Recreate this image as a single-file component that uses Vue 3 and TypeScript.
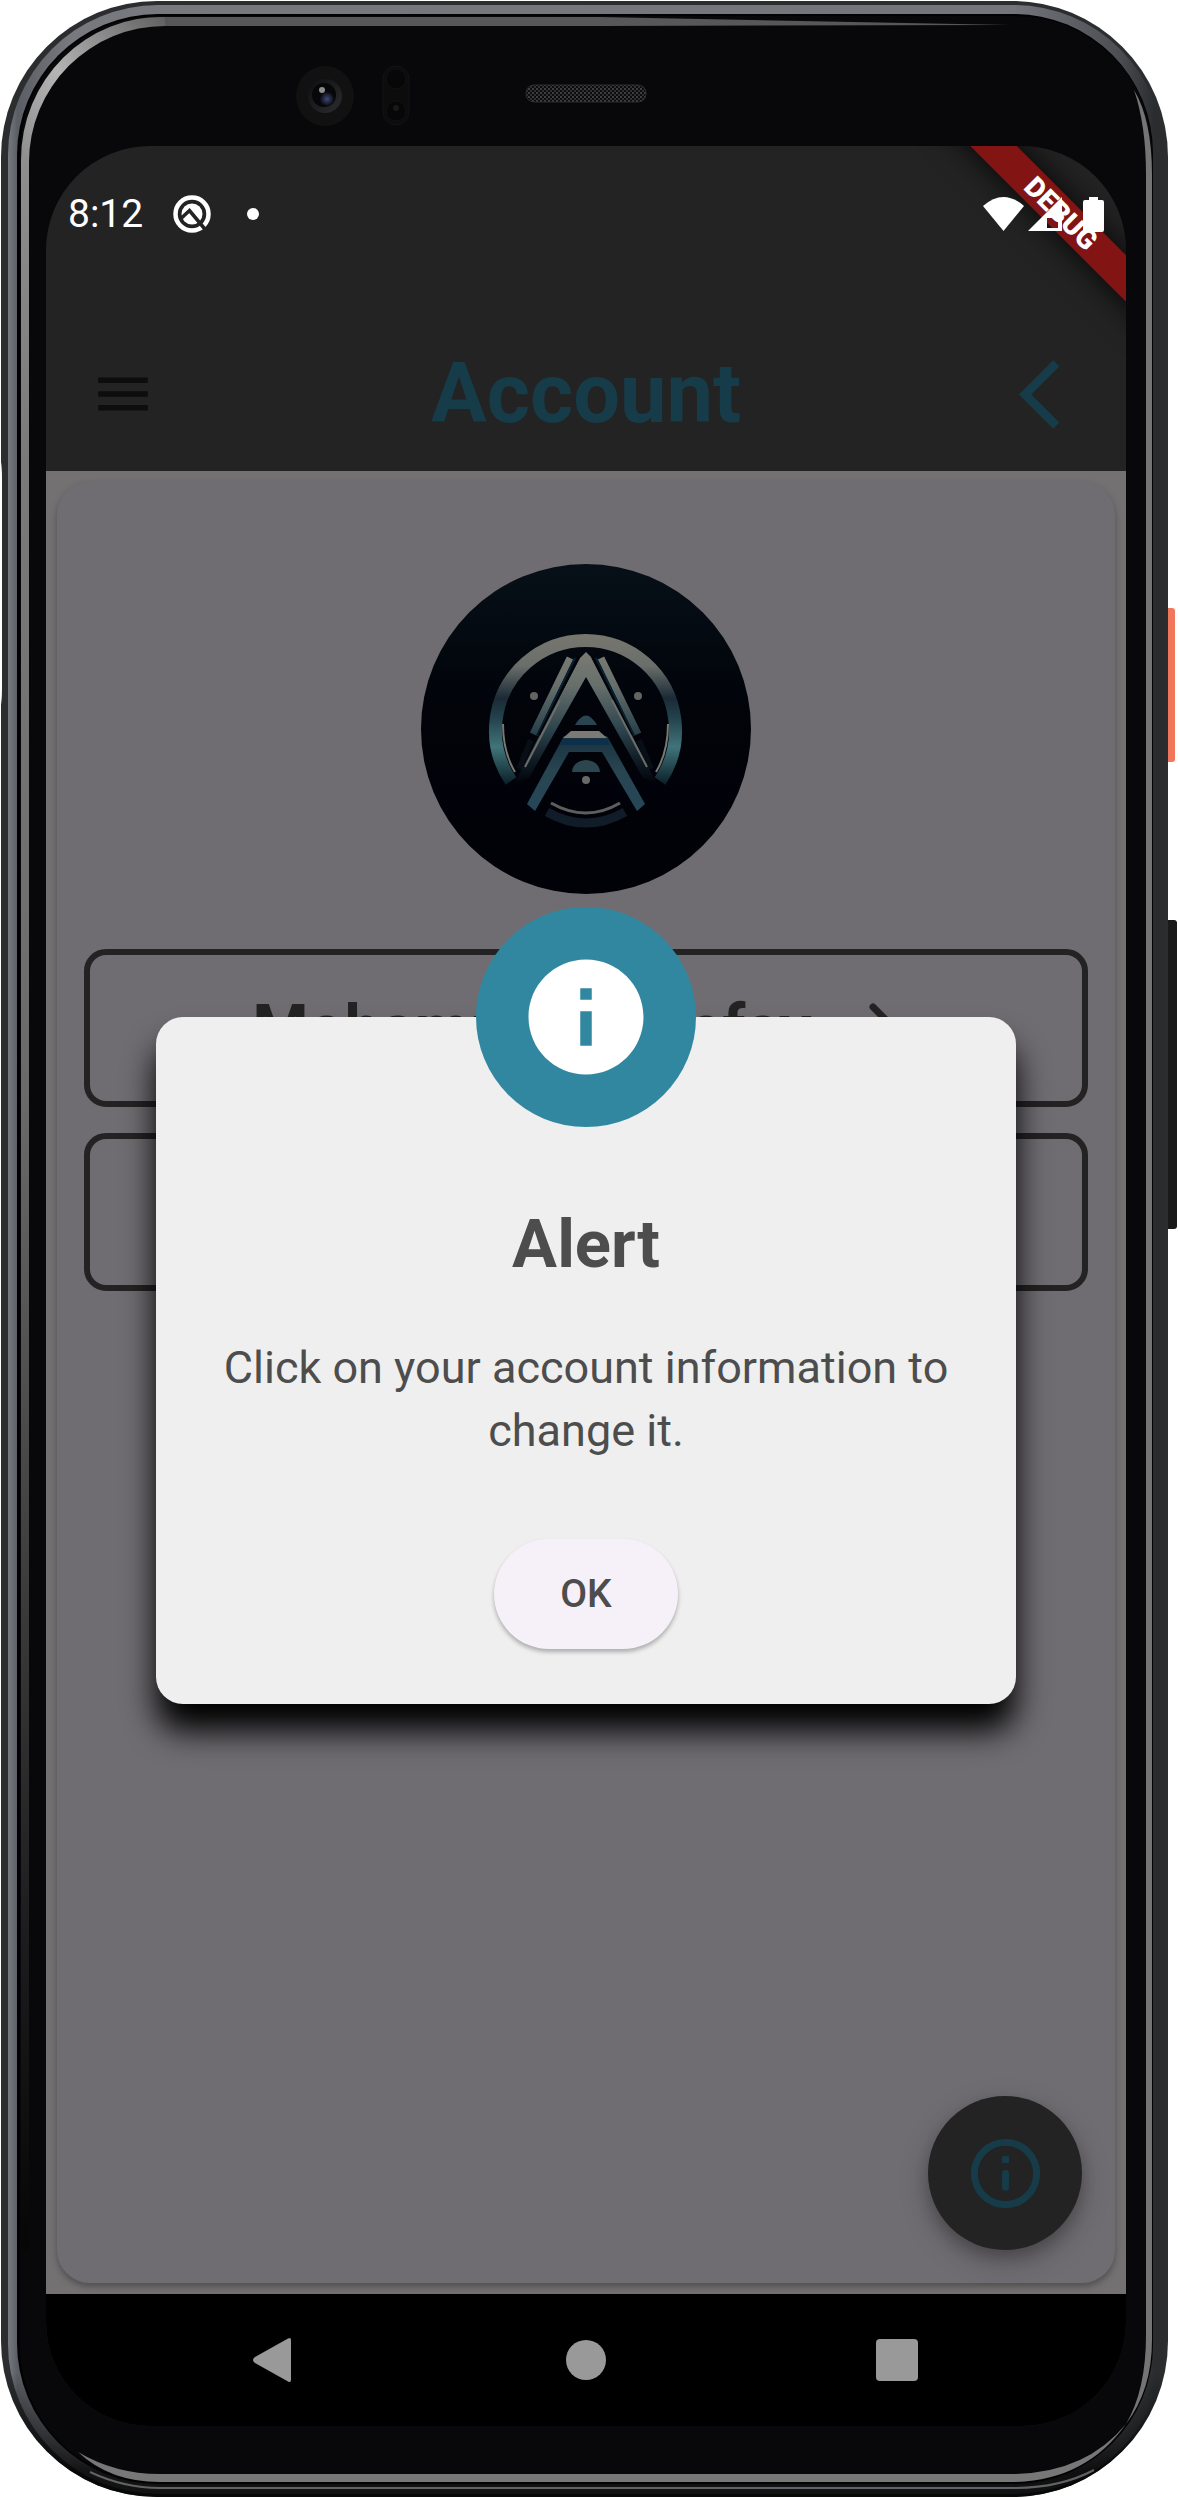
<script setup lang="ts">
import { ref } from 'vue'

interface Field {
  label: string
  value: string
}

const fields: Field[] = [
  { label: 'Name', value: 'Mohammed Elrefay' },
  { label: 'Email', value: '' },
]

const alertOpen = ref(true)
</script>

<template>
  <div class="device">
    <svg class="frame" viewBox="0 0 1178 2498" preserveAspectRatio="none" aria-hidden="true">
      <defs>
        <linearGradient id="rim" gradientUnits="userSpaceOnUse" x1="0" y1="0" x2="1178" y2="0">
          <stop offset="0" stop-color="#8d9399" />
          <stop offset="0.015" stop-color="#5b5e64" />
          <stop offset="0.06" stop-color="#77797f" />
          <stop offset="0.86" stop-color="#74757c" />
          <stop offset="0.95" stop-color="#4c4e53" />
          <stop offset="0.98" stop-color="#2a2c2e" />
          <stop offset="1" stop-color="#2a2c2e" />
        </linearGradient>
        <linearGradient id="rimBottom" x1="0" y1="0" x2="0" y2="1">
          <stop offset="0.95" stop-color="#000" stop-opacity="0" />
          <stop offset="0.99" stop-color="#000" stop-opacity="0.85" />
        </linearGradient>
        <linearGradient id="glintLeft" gradientUnits="userSpaceOnUse" x1="0" y1="150" x2="0" y2="2250">
          <stop offset="0" stop-color="#8f8f8f" />
          <stop offset="0.15" stop-color="#7a7a7a" />
          <stop offset="0.45" stop-color="#6a6a6a" />
          <stop offset="0.85" stop-color="#1c1c1e" />
          <stop offset="1" stop-color="#060607" />
        </linearGradient>
        <linearGradient id="glintCorner" gradientUnits="userSpaceOnUse" x1="25" y1="160" x2="180" y2="20">
          <stop offset="0" stop-color="#8f8f8f" />
          <stop offset="0.4" stop-color="#b4b4b4" />
          <stop offset="1" stop-color="#5a5a5a" />
        </linearGradient>
        <linearGradient id="lens" x1="0" y1="0" x2="1" y2="1">
          <stop offset="0" stop-color="#0e0e10" />
          <stop offset="1" stop-color="#2c2d30" />
        </linearGradient>
        <radialGradient id="lensBlue">
          <stop offset="0" stop-color="#3c4a78" />
          <stop offset="1" stop-color="#0a0b12" />
        </radialGradient>
        <pattern id="mesh" width="4" height="4" patternUnits="userSpaceOnUse">
          <rect width="4" height="4" fill="#0c0c0d" />
          <rect width="2" height="2" fill="#3e3e40" />
          <rect x="2" y="2" width="2" height="2" fill="#303032" />
        </pattern>
      </defs>
      <rect x="1160" y="608" width="15" height="154" rx="3" fill="#f0775c" />
      <rect x="1160" y="920" width="17" height="309" rx="3" fill="#1a1a1a" />
      <rect x="1" y="1" width="1167" height="2496" rx="156" fill="#2b2d2e" />
      <path d="M0 458q2 6 2 20v210q0 14-2 22z" fill="#fff" />
      <rect x="8" y="5" width="1156" height="2489" rx="150" fill="url(#rim)" />
      <rect x="1" y="1" width="1167" height="2496" rx="156" fill="url(#rimBottom)" />
      <path d="M17 2250V155A141 141 0 0 1 158 14H1014A139 139 0 0 1 1153 153V2345A139 139 0 0 1 1014 2484H158A141 141 0 0 1 17 2343Z" fill="#020203" />
      <path d="M90 2472Q124 2488 160 2488H1014Q1060 2488 1094 2470" fill="none" stroke="#606265" stroke-width="2" />
      <rect x="20" y="16" width="1132" height="2466" rx="136" fill="#08080a" />
      <path d="M21 160H29V2250H21Z" fill="url(#glintLeft)" />
      <path d="M21 160A140 143 0 0 1 165 17V26A136 136 0 0 0 29 162Z" fill="url(#glintCorner)" />
      <path d="M165 17H600L1010 25L600 26H165Z" fill="#575757" />
      <path d="M1134 90Q1152 120 1152 175V2340Q1152 2390 1126 2424Q1146 2390 1146 2335V175Q1146 125 1134 90Z" fill="#747474" />
      <path d="M1126 2424Q1085 2482 1010 2482H160Q110 2482 78 2452Q115 2474 160 2474H1010Q1085 2474 1126 2424Z" fill="#777" />

      <ellipse cx="325" cy="96" rx="29" ry="30" fill="#111112" />
      <circle cx="325" cy="96" r="17" fill="url(#lens)" />
      <circle cx="324" cy="95" r="12" fill="#07070a" />
      <circle cx="327" cy="99" r="7" fill="url(#lensBlue)" />
      <circle cx="322" cy="90" r="3" fill="#8c8c8e" />
      <rect x="383" y="66" width="26" height="59" rx="13" fill="#0c0c0d" stroke="#131315" />
      <circle cx="396" cy="79" r="10" fill="#070708" stroke="#111113" />
      <circle cx="396" cy="111" r="10" fill="#070708" stroke="#111113" />
      <circle cx="396" cy="108" r="3" fill="#19191b" />
      <rect x="526" y="85" width="120" height="17" rx="8" fill="url(#mesh)" stroke="#2c2c2e" />
    </svg>

    <div class="screen">
      <div class="status">
        <time class="clock">8:12</time>
        <svg class="notice" viewBox="0 0 38 38" aria-hidden="true">
          <circle cx="19" cy="19" r="16.500" fill="none" stroke="#fff" stroke-width="4.500" />
          <circle cx="19" cy="19" r="10.500" fill="#fff" />
          <path d="M8.500 23L16.500 15.500L33.500 36" fill="none" stroke="#232323" stroke-width="3.600" />
        </svg>
        <span class="dot"></span>
        <span class="spacer"></span>
        <svg class="wifi" viewBox="0 0 41 34" aria-hidden="true">
          <path d="M0 9Q20.500-9 41 9L20.500 34Z" fill="#fff" />
        </svg>
        <svg class="signal" viewBox="0 0 34 34" aria-hidden="true">
          <path d="M34 0V34H0ZM19 21V31H30V21Z" fill="#fff" fill-rule="evenodd" />
        </svg>
        <svg class="battery" viewBox="0 0 21 35" aria-hidden="true">
          <path d="M6 0H15V3H19Q21 3 21 5V33Q21 35 19 35H2Q0 35 0 33V5Q0 3 2 3H6Z" fill="#fff" />
        </svg>
      </div>
      <div class="ribbon">DEBUG</div>

      <header class="bar">
        <button class="menu" type="button" aria-label="Menu">
          <svg viewBox="0 0 24 24"><path d="M3 18h18v-2H3v2zm0-5h18v-2H3v2zm0-7v2h18V6H3z" fill="#0d0d0e" /></svg>
        </button>
        <h1>Account</h1>
        <button class="back" type="button" aria-label="Back">
          <svg viewBox="0 0 24 24"><path d="M11.670 3.870L9.900 2.100 0 12l9.900 9.900 1.770-1.770L3.540 12z" fill="#173c49" /></svg>
        </button>
      </header>

      <main class="content">
        <section class="card">
          <svg class="avatar" viewBox="0 0 330 330" role="img" aria-label="Profile picture">
            <defs>
              <linearGradient id="sky" x1="0" y1="0" x2="0" y2="1">
                <stop offset="0" stop-color="#071018" />
                <stop offset="0.4" stop-color="#01040a" />
                <stop offset="1" stop-color="#010108" />
              </linearGradient>
              <linearGradient id="ring" gradientUnits="userSpaceOnUse" x1="0" y1="72" x2="0" y2="220">
                <stop offset="0" stop-color="#77766e" />
                <stop offset="0.2" stop-color="#6a6f6b" />
                <stop offset="0.42" stop-color="#1b2a36" />
                <stop offset="0.55" stop-color="#23414c" />
                <stop offset="0.75" stop-color="#41747a" />
                <stop offset="1" stop-color="#0c2029" />
              </linearGradient>
              <linearGradient id="leg" gradientUnits="userSpaceOnUse" x1="0" y1="88" x2="0" y2="218">
                <stop offset="0" stop-color="#7b7a72" />
                <stop offset="0.25" stop-color="#68706c" />
                <stop offset="0.6" stop-color="#2c434d" />
                <stop offset="0.85" stop-color="#0e1922" />
                <stop offset="1" stop-color="#03060c" />
              </linearGradient>
              <linearGradient id="foot" gradientUnits="userSpaceOnUse" x1="0" y1="168" x2="0" y2="246">
                <stop offset="0" stop-color="#172f3f" />
                <stop offset="0.5" stop-color="#284550" />
                <stop offset="1" stop-color="#264759" />
              </linearGradient>
            </defs>
            <circle cx="165" cy="165" r="165" fill="url(#sky)" />
            <path d="M90 217A90 90 0 1 1 239 217" fill="none" stroke="url(#ring)" stroke-width="13" />
            <path d="M94 208Q82 188 82 160M235 208Q247 188 247 160" fill="none" stroke="#777a74" stroke-width="2" />
            <path d="M126 248Q165 270 204 248" fill="none" stroke="#101c27" stroke-width="9" />
            <path d="M130 239Q165 259 199 239" fill="none" stroke="#5c5f5e" stroke-width="3" />
            <path d="M149 94L112 170M180 94L217 170" fill="none" stroke="url(#leg)" stroke-width="7" />
            <path d="M154 94L116 172M175 94L213 172" fill="none" stroke="#062130" stroke-width="2" />
            <path d="M110 176L98 205M218 176L230 205" fill="none" stroke="#080e15" stroke-width="6" />
            <path d="M165 88L171 94L235 218L222 214L165 113L108 214L94 218L159 94Z" fill="url(#leg)" />
            <path d="M158 93L118 171M171 93L211 171" fill="none" stroke="#010309" stroke-width="2" />
            <path d="M104 203L139 136M226 203L191 136" fill="none" stroke="#6c6d68" stroke-width="2" />
            <path d="M106 240L143 172H186L224 240L216 247L181 188H148L114 247Z" fill="url(#foot)" />
            <path d="M142 174L150 167H178L186 174Z" fill="#7b7a76" />
            <path d="M142 175H186L189 181H139Z" fill="#0c3049" />
            <path d="M154 161Q165 142 176 161Z" fill="#294650" />
            <path d="M151 208Q152 197 165 196Q178 197 179 208Z" fill="#2c4650" />
            <circle cx="165" cy="216" r="4" fill="#686a6a" />
            <circle cx="113" cy="132" r="4" fill="#63645f" />
            <circle cx="217" cy="132" r="4" fill="#63645f" />
          </svg>

          <button v-for="field in fields" :key="field.label" class="field" type="button" :aria-label="field.label">
            <template v-if="field.value">
              <span>{{ field.value }}</span>
              <svg class="next" viewBox="0 0 66 66" aria-hidden="true">
                <path d="M20 12L41 33L20 54" fill="none" stroke="#232323" stroke-width="7" stroke-linecap="round" stroke-linejoin="round" />
              </svg>
            </template>
          </button>
        </section>

        <button class="fab" type="button" aria-label="Show information" @click="alertOpen = true">
          <svg viewBox="0 0 24 24">
            <circle cx="12" cy="12" r="9" fill="none" stroke="#173c49" stroke-width="2" />
            <path d="M11 7h2v2h-2z" fill="#173c49" />
            <path d="M12 12v4" stroke="#173c49" stroke-width="2" stroke-linecap="round" />
          </svg>
        </button>
      </main>

      <div v-if="alertOpen" class="overlay">
        <div class="alert" role="alertdialog" aria-labelledby="alert-title" aria-describedby="alert-text">
          <div class="badge">
            <svg viewBox="0 0 24 24" aria-hidden="true">
              <path d="M12 2C6.480 2 2 6.480 2 12s4.480 10 10 10 10-4.480 10-10S17.520 2 12 2zm1 15h-2v-6h2v6zm0-8h-2V7h2v2z" fill="#fff" />
            </svg>
          </div>
          <h2 id="alert-title">Alert</h2>
          <p id="alert-text">Click on your account information to change it.</p>
          <button class="ok" type="button" @click="alertOpen = false">OK</button>
        </div>
      </div>

      <nav class="nav" aria-label="System">
        <button type="button" aria-label="Go back">
          <svg viewBox="0 0 46 46"><path d="M3 20L36 1.500Q39 0 39 3V43Q39 46 36 44.500L3 26Q-1 23 3 20Z" fill="#999" /></svg>
        </button>
        <button type="button" aria-label="Home">
          <svg viewBox="0 0 46 46"><circle cx="23" cy="23" r="20" fill="#999" /></svg>
        </button>
        <button type="button" aria-label="Recent apps">
          <svg viewBox="0 0 46 46"><rect x="2" y="2" width="42" height="42" rx="4" fill="#999" /></svg>
        </button>
      </nav>
    </div>
  </div>
</template>

<style>
body {
  background: #fff;
}
</style>

<style scoped>
.device {
  position: relative;
  box-sizing: border-box;
  min-height: 100vh;
  padding: 146px 52px 72px 46px;
  display: flex;
  font-family: Roboto, sans-serif;
}

.frame {
  position: absolute;
  inset: 0;
  width: 100%;
  height: 100%;
}

.screen {
  position: relative;
  flex: 1;
  display: flex;
  flex-direction: column;
  overflow: hidden;
  border-radius: 104px;
  background: #232323;
}

button {
  border: 0;
  padding: 0;
  background: none;
  font-family: inherit;
  display: flex;
  align-items: center;
  justify-content: center;
}

.status {
  position: relative;
  z-index: 3;
  box-sizing: border-box;
  height: 171px;
  padding: 0 22px 35px;
  display: flex;
  align-items: center;
}

.clock {
  color: #fff;
  font-size: 39px;
  line-height: 46px;
}

.notice {
  width: 38px;
  height: 38px;
  margin-left: 30px;
}

.dot {
  width: 12px;
  height: 12px;
  margin-left: 36px;
  border-radius: 50%;
  background: #fff;
}

.spacer {
  flex: 1;
}

.wifi {
  width: 41px;
  height: 34px;
}

.signal {
  width: 34px;
  height: 34px;
  margin: 0 21px 0 4px;
}

.battery {
  width: 21px;
  height: 35px;
}

.ribbon {
  position: absolute;
  z-index: 2;
  top: 51px;
  right: -85px;
  width: 300px;
  transform: rotate(45deg);
  background: #821414;
  box-shadow: 0 0 32px rgba(0, 0, 0, 0.9);
  color: #fff;
  font-size: 28px;
  font-weight: 900;
  line-height: 33px;
  text-align: center;
}

.bar {
  height: 154px;
  padding: 0 24px 0 44px;
  display: grid;
  grid-template-columns: 86px 1fr 106px;
  align-items: center;
}

.bar h1 {
  margin: 0;
  color: #173c49;
  font-size: 83px;
  font-weight: 700;
  line-height: 98px;
  text-align: center;
}

.menu svg {
  width: 66px;
  height: 66px;
}

.menu {
  justify-self: start;
}

.back {
  justify-self: end;
}

.back svg {
  width: 83px;
  height: 83px;
}

.content {
  position: relative;
  flex: 1;
  display: flex;
  padding: 11px;
  background: #747172;
}

.card {
  flex: 1;
  display: flex;
  flex-direction: column;
  align-items: stretch;
  padding: 82px 27px;
  border-radius: 33px;
  background: #706d72;
  box-shadow: 0 3px 8px rgba(0, 0, 0, 0.2), 0 4px 4px rgba(0, 0, 0, 0.12);
}

.avatar {
  align-self: center;
  width: 330px;
  height: 330px;
  margin-bottom: 55px;
}

.field {
  box-sizing: border-box;
  height: 158px;
  margin-bottom: 26px;
  border: 6px solid #232323;
  border-radius: 22px;
  gap: 42px;
  color: #232323;
  font-size: 64px;
  font-weight: 700;
}

.next {
  width: 66px;
  height: 66px;
}

.fab {
  position: absolute;
  right: 44px;
  bottom: 44px;
  width: 154px;
  height: 154px;
  border-radius: 50%;
  background: #232323;
  box-shadow: 0 10px 28px rgba(0, 0, 0, 0.26), 0 8px 14px rgba(0, 0, 0, 0.16);
}

.fab svg {
  width: 83px;
  height: 83px;
}

.overlay {
  position: absolute;
  z-index: 4;
  inset: 171px 0 132px;
  padding: 110px 110px 0;
  display: flex;
  align-items: center;
}

.alert {
  position: relative;
  flex: 1;
  padding: 187px 55px 55px;
  display: flex;
  flex-direction: column;
  align-items: center;
  border-radius: 27px;
  background: #efefef;
  box-shadow: 0 27px 32px #000;
  color: #4d4d4d;
}

.badge {
  position: absolute;
  top: -110px;
  width: 220px;
  height: 220px;
  border-radius: 50%;
  background: #3187a0;
  display: flex;
  align-items: center;
  justify-content: center;
}

.badge svg {
  width: 138px;
  height: 138px;
}

.alert h2 {
  margin: 0 0 52px;
  font-size: 67px;
  font-weight: 700;
  line-height: 80px;
}

.alert p {
  margin: 0 0 77px;
  font-size: 45px;
  line-height: 63px;
  text-align: center;
}

.ok {
  width: 184px;
  height: 110px;
  border-radius: 55px;
  background: #f6f1f8;
  box-shadow: 0 3px 4px rgba(0, 0, 0, 0.28);
  color: #4d4d4d;
  font-size: 39px;
  font-weight: 500;
}

.nav {
  height: 132px;
  display: flex;
  align-items: center;
  justify-content: center;
  gap: 179px;
  background: #000;
}

.nav button {
  width: 132px;
  height: 132px;
}

.nav svg {
  width: 46px;
  height: 46px;
}
</style>
